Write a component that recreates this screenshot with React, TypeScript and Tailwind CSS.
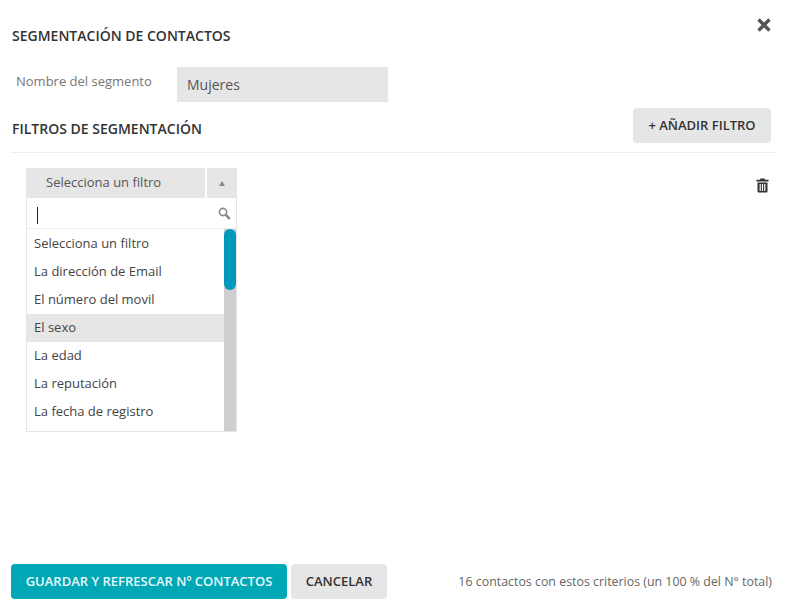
const filterOptions = [
  "Selecciona un filtro",
  "La dirección de Email",
  "El número del movil",
  "El sexo",
  "La edad",
  "La reputación",
  "La fecha de registro",
];

const App = () => {
  return (
    <div className="flex h-[616px] w-[786px] flex-col overflow-hidden bg-white font-['Open_Sans',sans-serif] text-[#333]">
      <div className="flex items-start justify-between pl-[12px] pr-[14px] pt-[26px]">
        <h1 className="text-[14px] font-[550] uppercase leading-[19px] text-[#333]">
          Segmentación de contactos
        </h1>
        <svg width="16" height="16" viewBox="0 0 16 16" className="-mt-[9px] text-[#555]">
          <path d="M2.5 2.5 13.5 13.5M13.5 2.5 2.5 13.5" stroke="currentColor" strokeWidth="3.4" />
        </svg>
      </div>

      <div className="mt-[22px] flex items-start pl-[16px]">
        <label className="w-[161px] pt-[5px] text-[13px] leading-[18px] text-[#777]">
          Nombre del segmento
        </label>
        <div className="flex h-[35px] w-[211px] items-center bg-[#e6e6e6] pb-[1px] pl-[10px] text-[14px] text-[#555]">
          Mujeres
        </div>
      </div>

      <div className="mt-[6px] flex items-center justify-between pl-[12px] pr-[15px]">
        <h2 className="pt-[6px] text-[14px] font-[550] uppercase text-[#333]">
          Filtros de segmentación
        </h2>
        <button className="flex h-[35px] w-[138px] items-center justify-center rounded-[4px] bg-[#e6e6e6] text-[13px] font-semibold text-[#333]">
          + AÑADIR FILTRO
        </button>
      </div>

      <div className="ml-[11px] mr-[10px] mt-[9px] border-t border-[#eeeeee]" />

      <div className="mt-[15px] flex items-start justify-between pl-[26px] pr-[16px]">
        <div className="w-[211px]">
          <div className="flex h-[30px] gap-[2px]">
            <div className="flex w-[179px] items-center bg-[#e6e6e6] pl-[20px] text-[13px] text-[#555]">
              Selecciona un filtro
            </div>
            <div className="flex flex-1 items-center justify-center bg-[#e6e6e6]">
              <div className="h-0 w-0 border-x-[3.5px] border-b-[5px] border-x-transparent border-b-[#888]" />
            </div>
          </div>
          <div className="border-x border-b border-[#e4e4e4]">
            <div className="flex h-[31px] items-center justify-between border-b border-[#eeeeee] pl-[10px] pr-[5px] pt-[4px]">
              <div className="h-[17px] w-px bg-[#222]" />
              <svg width="13" height="13" viewBox="0 0 13 13" className="-mt-[3px] text-[#888]">
                <circle cx="5" cy="5" r="3.6" fill="none" stroke="currentColor" strokeWidth="1.6" />
                <path d="M7.8 7.8 11.8 11.8" stroke="currentColor" strokeWidth="2.4" />
              </svg>
            </div>
            <div className="flex h-[202px]">
              <ul className="flex-1 pt-px">
                {filterOptions.map((option) => (
                  <li
                    key={option}
                    className={`flex h-[28px] items-center pl-[7px] text-[13px] text-[#444] ${
                      option === "El sexo" ? "bg-[#e6e6e6]" : ""
                    }`}
                  >
                    {option}
                  </li>
                ))}
              </ul>
              <div className="w-[12px] bg-[#cfcfcf]">
                <div className="h-[61px] rounded-[6px] bg-[#0099bb]" />
              </div>
            </div>
          </div>
        </div>
        <svg width="13" height="15" viewBox="0 0 13 15" className="mt-[10px] mr-[1px] text-[#333]">
          <path
            fillRule="evenodd"
            d="M4.5 0.5h4l.6 1.2H12.5v1.8H.5V1.7h3.4zM1.5 4.5h10v9a1 1 0 0 1-1 1h-8a1 1 0 0 1-1-1zM3.6 6v7h1.2V6zM5.9 6v7h1.2V6zM8.2 6v7h1.2V6z"
            fill="currentColor"
          />
        </svg>
      </div>

      <div className="mt-auto mb-[17px] flex items-center pl-[11px] pr-[14px]">
        <button className="flex h-[35px] w-[276px] items-center justify-center rounded-[4px] bg-[#00a8b5] text-[13px] font-semibold text-[#e8f8fa]">
          GUARDAR Y REFRESCAR Nº CONTACTOS
        </button>
        <button className="ml-[4px] flex h-[35px] w-[96px] items-center justify-center rounded-[4px] bg-[#e6e6e6] text-[13px] font-semibold text-[#333]">
          CANCELAR
        </button>
        <span className="ml-auto pt-[2px] text-[12.4px] text-[#666]">
          16 contactos con estos criterios (un 100 % del N° total)
        </span>
      </div>
    </div>
  );
};

export default App;
